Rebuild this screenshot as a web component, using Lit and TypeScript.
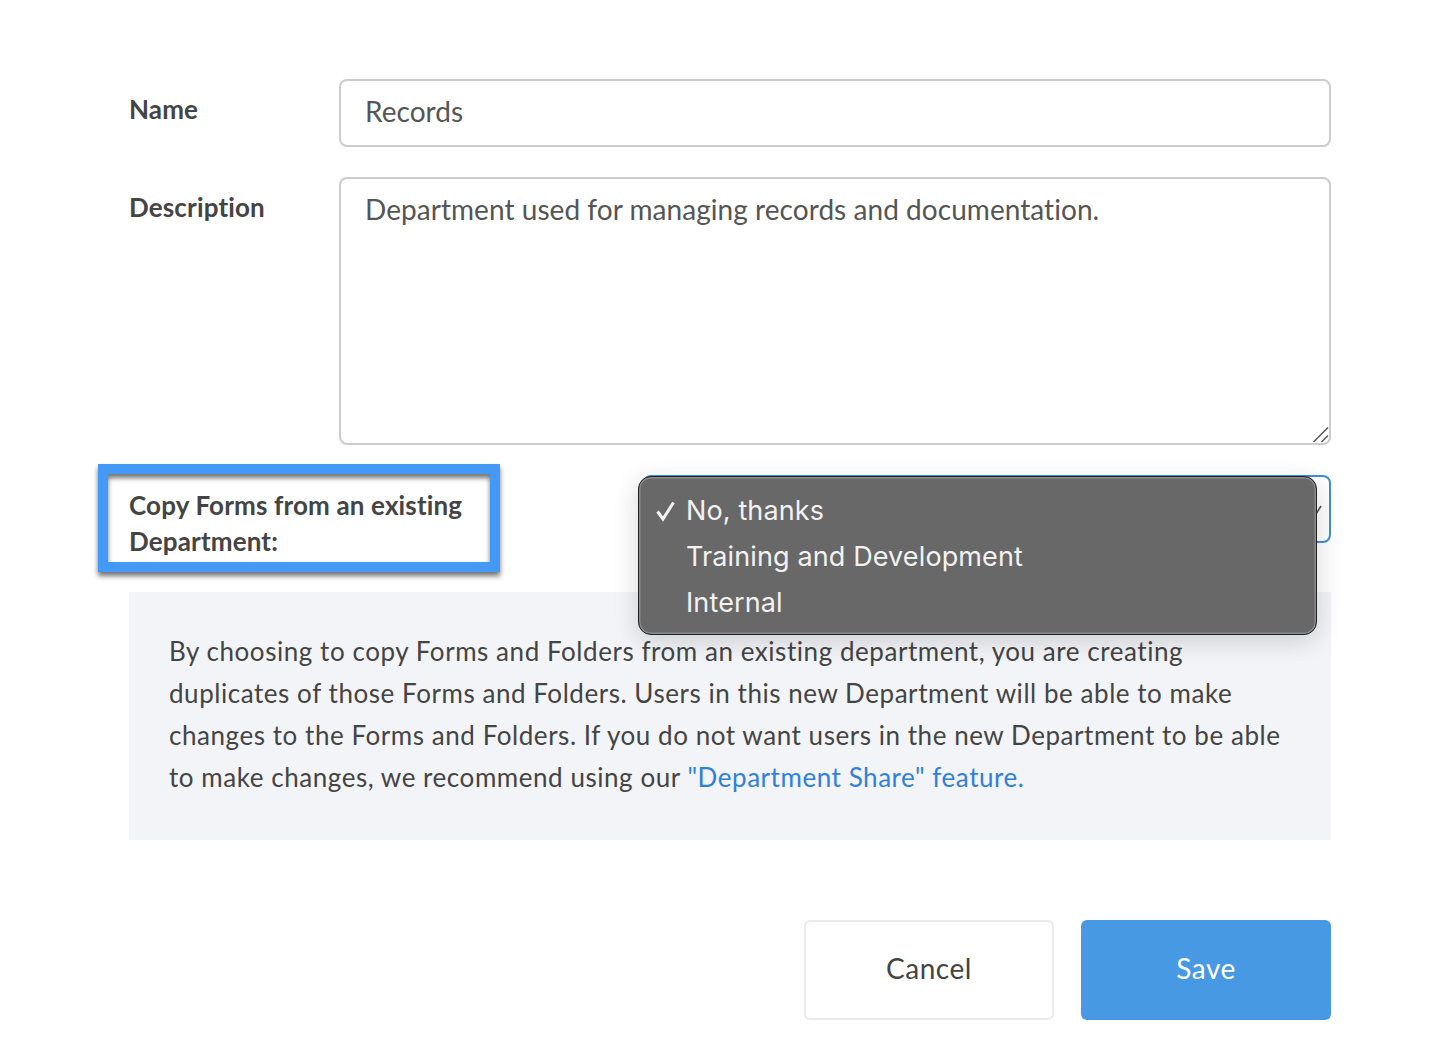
import { LitElement, html, css } from "lit";
import { customElement } from "lit/decorators.js";

@customElement("app-root")
export class AppRoot extends LitElement {
  static styles = css`
    :host { display: block; width: 1456px; height: 1056px; background: #fff; font-family: Lato, "Liberation Sans", sans-serif; color: #444; overflow: hidden; }
    .form { display: flex; flex-direction: column; padding: 79px 125px 0 129px; }
    .row { display: grid; grid-template-columns: 210px 992px; margin-bottom: 30px; }
    .label { padding-top: 12px; font-size: 26px; line-height: 36px; font-weight: 700; color: #444; letter-spacing: 0.15px; }
    .field { box-sizing: border-box; width: 100%; border: 2px solid #ccc; border-radius: 8px; padding: 0 24px; font: inherit; font-size: 28px; letter-spacing: 0.05px; color: #555; background: #fff; outline: none; }
    input.field { height: 68px; padding-bottom: 4px; }
    .area { position: relative; }
    textarea.field { display: block; height: 268px; padding-top: 12px; line-height: 36px; resize: none; }
    .grip { position: absolute; right: 2px; bottom: 2px; }
    .copy { position: relative; display: flex; justify-content: space-between; height: 85px; margin-bottom: 32px; }
    .copy .label { width: 360px; }
    .highlight { position: absolute; left: -31px; top: -11px; width: 382px; height: 88px; border: 10px solid #4599f6; box-shadow: 0 4px 5px rgba(0,0,0,.55), inset 0 4px 5px rgba(0,0,0,.55); pointer-events: none; }
    .select { position: relative; box-sizing: border-box; width: 688px; height: 68px; border: 2px solid #3d8fd9; border-radius: 8px; background: #fff; }
    .chev { position: absolute; right: 6px; top: 26px; }
    .popup { position: absolute; left: -7px; top: -1px; box-sizing: border-box; width: 679px; height: 159px; padding: 11px 0 0 47px; background: #686868; border: 1px solid #222; border-radius: 13px; box-shadow: inset 0 0 0 1.5px #8a8a8a, 0 6px 26px rgba(0,0,0,.16); font-family: Inter, sans-serif; font-size: 27px; letter-spacing: 0.12px; line-height: 46px; color: #f2f2f2; }
    .opt { position: relative; }
    .check { position: absolute; left: -31px; top: 12px; }
    .info { box-sizing: border-box; height: 248px; padding: 38px 40px 0; background: #f3f4f8; font-size: 26px; line-height: 42px; letter-spacing: 0.55px; color: #444; }
    .info a { color: #2f80dc; text-decoration: none; }
    .actions { display: flex; justify-content: flex-end; gap: 27px; margin-top: 80px; }
    button { box-sizing: border-box; width: 250px; height: 100px; padding: 0 0 4px; border-radius: 6px; font: inherit; font-size: 28px; letter-spacing: .5px; }
    .cancel { border: 2px solid #ebebeb; background: #fff; color: #444; }
    .save { border: 0; background: #4699e2; color: #fff; }
  `;

  render() {
    return html`
      <div class="form">
        <div class="row">
          <div class="label">Name</div>
          <input class="field" .value=${"Records"} />
        </div>
        <div class="row">
          <div class="label">Description</div>
          <div class="area">
            <textarea class="field" .value=${"Department used for managing records and documentation."}></textarea>
            <svg class="grip" width="16" height="16" viewBox="0 0 16 16"><path d="M0.5 15 L15 0.5 M8.5 15 L15 8.5" fill="none" stroke="#555" stroke-width="1.5"/></svg>
          </div>
        </div>
        <div class="copy">
          <div class="label">Copy Forms from an existing Department:</div>
          <div class="highlight"></div>
          <div class="select">
            <svg class="chev" width="12" height="12" viewBox="0 0 12 12"><path d="M1 9 L5 11 L10 3" fill="none" stroke="#555" stroke-width="1.6"/></svg>
            <div class="popup">
              <div class="opt">
                <svg class="check" width="22" height="22" viewBox="0 0 22 22"><path d="M2.5 11.5 L8 19 L18.5 2.5" fill="none" stroke="#f2f2f2" stroke-width="3"/></svg>
                No, thanks
              </div>
              <div class="opt">Training and Development</div>
              <div class="opt">Internal</div>
            </div>
          </div>
        </div>
        <div class="info">
          By choosing to copy Forms and Folders from an existing department, you are creating duplicates of those Forms and Folders. Users in this new Department will be able to make changes to the Forms and Folders. If you do not want users in the new Department to be able to make changes, we recommend using our <a href="#">"Department Share" feature.</a>
        </div>
        <div class="actions">
          <button class="cancel">Cancel</button>
          <button class="save">Save</button>
        </div>
      </div>
    `;
  }
}
